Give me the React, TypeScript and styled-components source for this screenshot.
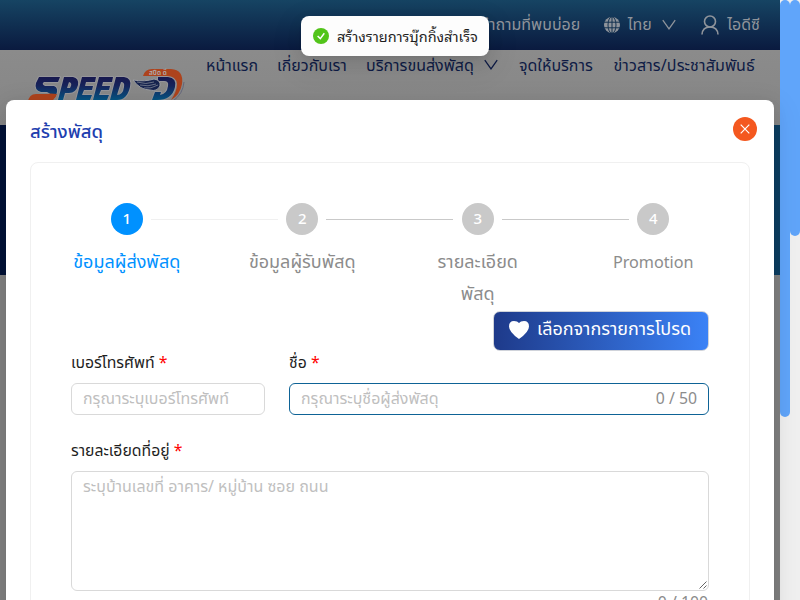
import React from "react";
import styled, { createGlobalStyle, css } from "styled-components";

const Global = createGlobalStyle`
  * { box-sizing: border-box; }
  html, body { margin: 0; padding: 0; height: 600px; overflow: hidden; background: #808080; }
  body { font-family: "Noto Sans Thai", "Noto Sans", sans-serif; font-size: 16px; color: #1f1f1f; }
`;

const Screen = styled.div`
  position: relative;
  display: flex;
  width: 800px;
  height: 600px;
  overflow: hidden;
`;

const Page = styled.div`
  display: flex;
  flex-direction: column;
  width: 780px;
  background: #808080;
`;

const TopBar = styled.header`
  height: 50px;
  flex: none;
  display: flex;
  justify-content: flex-end;
  align-items: center;
  padding: 0 20px 1px 0;
  background: linear-gradient(#164463, #0a1a3f);
  color: #8f949b;
  white-space: nowrap;
`;

const NavBar = styled.nav`
  height: 75px;
  flex: none;
  display: flex;
  align-items: flex-start;
  padding-left: 26px;
  background: linear-gradient(#8b8b8b, #868686);
  color: #0e1b45;
  white-space: nowrap;
`;

const LogoSlot = styled.div`
  width: 180px;
  padding-top: 14px;
`;

const NavChevron = styled.span`
  width: 35px;
  padding-top: 9px;
`;

const Hero = styled.div`
  height: 150px;
  flex: none;
  background: linear-gradient(90deg, #001136, #0c3d60);
`;

const Label = styled.span<{ $w?: number; $size?: number; $gap?: number; $space?: number }>`
  display: inline-block;
  white-space: nowrap;
  font-size: ${(p) => p.$size ?? 16}px;
  line-height: 32px;
  ${(p) => p.$w && css`width: ${p.$w}px;`}
  margin-left: ${(p) => p.$gap ?? 0}px;
  letter-spacing: ${(p) => p.$space ?? 0}px;
`;

const Icon = styled.svg<{ $gap?: number }>`
  display: block;
  flex: none;
  margin-left: ${(p) => p.$gap ?? 0}px;
`;

const Scrollbar = styled.div`
  width: 10px;
  height: 600px;
  background: #f0f0f0;
`;

const Thumb = styled.div<{ $h: number }>`
  height: ${(p) => p.$h}px;
  border-radius: 5px;
  background: #60a5fa;
`;

const Modal = styled.section`
  position: absolute;
  left: 6px;
  top: 100px;
  width: 768px;
  height: 520px;
  padding: 16px 24px 0;
  background: #fff;
  border-radius: 8px;
  box-shadow: 0 6px 16px rgba(0, 0, 0, 0.08), 0 9px 28px 8px rgba(0, 0, 0, 0.05);
`;

const ModalHead = styled.div`
  display: flex;
  justify-content: space-between;
  align-items: flex-start;
  height: 46px;
  margin-right: -7px;
  color: #1e40af;
  font-weight: 500;
`;

const Close = styled.button`
  width: 24px;
  height: 24px;
  margin: 1px 0 0;
  padding: 0;
  border: 0;
  border-radius: 50%;
  background: #f4581f;
  display: grid;
  place-items: center;
`;

const Card = styled.div`
  height: 480px;
  border: 1px solid #f0f0f0;
  border-radius: 8px;
  padding: 40px 40px 0;
`;

const Steps = styled.div`
  display: grid;
  grid-template-columns: repeat(4, 175.5px);
  width: 702px;
  margin-left: -32px;
  height: 108px;
`;

const Step = styled.div<{ $active?: boolean }>`
  display: grid;
  grid-template-columns: 71.75px 32px 71.75px;
  grid-template-rows: 32px auto;
  row-gap: 12px;
  align-content: start;
  color: ${(p) => (p.$active ? "#0091ff" : "#8c8c8c")};
`;

const Dot = styled.div<{ $active?: boolean }>`
  grid-column: 2;
  width: 32px;
  height: 32px;
  border-radius: 50%;
  background: ${(p) => (p.$active ? "#0091ff" : "#c9c9c9")};
  color: #fff;
  text-align: center;
  line-height: 33px;
  font-size: 15px;
  font-weight: 500;
`;

const Rail = styled.div<{ $light?: boolean }>`
  height: 1px;
  width: 127px;
  margin: 16px 0 0 8px;
  background: ${(p) => (p.$light ? "#f0f0f0" : "#c9c9c9")};
`;

const StepTitle = styled.div<{ $latin?: boolean }>`
  grid-column: 1 / 4;
  grid-row: 2;
  text-align: center;
  line-height: 32px;
  font-size: ${(p) => (p.$latin ? 16.2 : 18)}px;
  white-space: pre-line;
`;

const Favourite = styled.button`
  display: flex;
  align-items: center;
  width: 216px;
  height: 40px;
  margin: 0 0 0 auto;
  padding: 0 0 2px 15px;
  border: 1px solid #d0d3da;
  border-radius: 7px;
  background: linear-gradient(90deg, #1e3a8a, #3b82f6);
  color: #fff;
  font: inherit;
  font-weight: 450;
`;

const Row = styled.div`
  display: grid;
  grid-template-columns: 194px 420px;
  column-gap: 24px;
  margin-bottom: 24px;
`;

const FieldLabel = styled.label`
  display: block;
  height: 32px;
  line-height: 25px;
  font-size: 15.8px;
  white-space: nowrap;
`;

const Star = styled.span`
  color: #f00;
`;

const Input = styled.div<{ $focus?: boolean; $area?: boolean }>`
  position: relative;
  display: flex;
  justify-content: space-between;
  height: ${(p) => (p.$area ? 120 : 32)}px;
  padding: 0 11px;
  border: 1px solid ${(p) => (p.$focus ? "#0e6396" : "#d9d9d9")};
  border-radius: 6px;
  line-height: 30px;
  color: #bfbfbf;
`;

const Count = styled.span`
  color: #8c8c8c;
  font-size: 15.8px;
  line-height: 31px;
`;

const TotalCount = styled.div`
  text-align: right;
  padding-right: 1px;
  line-height: 24px;
  font-size: 15.8px;
  color: #8c8c8c;
`;

const Grip = styled.svg`
  position: absolute;
  right: 1px;
  bottom: 1px;
`;

const Toast = styled.div`
  position: absolute;
  left: 301px;
  top: 16px;
  width: 188px;
  height: 40px;
  display: flex;
  align-items: center;
  padding-left: 12px;
  background: #fdfdfd;
  border-radius: 8px;
  font-family: "Noto Sans Thai Looped", "Noto Sans", sans-serif;
  box-shadow: 0 6px 16px rgba(0, 0, 0, 0.08), 0 3px 6px -4px rgba(0, 0, 0, 0.12), 0 9px 28px 8px rgba(0, 0, 0, 0.05);
`;

const Chevron = ({ gap }: { gap: number }) => (
  <Icon $gap={gap} width="14" height="12" viewBox="0 0 14 12" fill="none" stroke="currentColor" strokeWidth="1.3">
    <path d="M.8 1.2 7 9.8l6.200-8.600" />
  </Icon>
);

const Logo = () => (
  <Icon width="162" height="52" viewBox="0 0 162 52">
    <defs>
      <linearGradient id="ink" gradientUnits="userSpaceOnUse" x1="0" y1="12" x2="0" y2="36">
        <stop offset="0" stopColor="#18174c" />
        <stop offset=".4" stopColor="#17245b" />
        <stop offset="1" stopColor="#075583" />
      </linearGradient>
    </defs>
    <g stroke="#96969a" strokeWidth="2" strokeLinejoin="round" fill="url(#ink)" paintOrder="stroke" fillRule="evenodd">
      <path d="M13 13H34L32 18H18Q15 20 19 22H28Q33 24 30 31L28 34Q26 30 21 28H15Q8 26 10 19Z" />
      <path d="M38 13H47Q53 14 52 21Q50 29 43 29H39L37 36H32Z M43 18L41 24H44Q47 19 43 18Z" />
      <path d="M56 13H70L69 18H60L59 22H67L66 26H58L56 31H66L64 36H50Z" />
      <path d="M73 13H87L86 18H77L76 22H84L83 26H75L73 31H83L81 36H67Z" />
      <path d="M90 13H98Q106 14 104 23Q101 36 91 36H84Z M95 18L91 31Q97 31 98 23Q99 18 95 18Z" />
      <path d="M132 13H142Q151 14 149 23Q146 36 131 36H126L129 28H135L134 31Q141 30 142 22Q143 17 138 17H132Z" />
    </g>
    <path d="M2 38Q3 30 10 30H21Q24 29 31 30Q29 37 21 38Z" fill="#ad431d" />
    <path d="M117 12Q119 5 126 5H145Q158 6 156 20Q154 31 145 36Q151 27 151 20Q150 12 141 12Z" fill="#ad431d" />
    <path d="M158 18Q157 30 147 37" fill="none" stroke="#5c6078" strokeWidth=".8" />
    <path d="M107 16Q119 18 128 15Q135 16 134 22Q131 28 124 26Q114 26 107 16Z" fill="#17244f" stroke="#9a9ca1" strokeWidth="1" />
    <path d="M111 18Q120 21 128 18M114 21Q122 23 130 20M118 24Q125 25 132 21" fill="none" stroke="#8b919c" strokeWidth=".7" />
    <text x="123" y="10.500" fontSize="6.500" fontWeight="600" fill="#b0b0b0">สปีด ดี</text>
  </Icon>
);

export default function App() {
  return (
    <>
      <Global />
      <Screen>
        <Page>
          <TopBar>
            <Label>คำถามที่พบบ่อย</Label>
            <Icon $gap={24} width="16" height="16" viewBox="0 0 16 16">
              <circle cx="8" cy="8" r="8" fill="currentColor" />
              <path d="M0 5.200H16M0 10.800H16M8 0V16" stroke="#12304f" strokeWidth="1" />
              <ellipse cx="8" cy="8" rx="4" ry="8.300" fill="none" stroke="#12304f" />
            </Icon>
            <Label $gap={7.5}>ไทย</Label>
            <Chevron gap={10} />
            <Icon $gap={25.5} width="18" height="20" viewBox="0 0 18 20" fill="none" stroke="currentColor" strokeWidth="1.600">
              <circle cx="9" cy="6.500" r="5.500" />
              <path d="M1 19.500Q1.500 12 9 12t8 7.500" />
            </Icon>
            <Label $gap={8}>ไอดีซี</Label>
          </TopBar>
          <NavBar>
            <LogoSlot><Logo /></LogoSlot>
            <Label $w={71}>หน้าแรก</Label>
            <Label $w={89}>เกี่ยวกับเรา</Label>
            <Label $w={118}>บริการขนส่งพัสดุ</Label>
            <NavChevron><Chevron gap={0} /></NavChevron>
            <Label $w={94.5}>จุดให้บริการ</Label>
            <Label $space={0.12}>ข่าวสาร/ประชาสัมพันธ์</Label>
          </NavBar>
          <Hero />
        </Page>
        <Scrollbar><Thumb $h={417} /></Scrollbar>
        <Scrollbar><Thumb $h={236} /></Scrollbar>

        <Modal>
          <ModalHead>
            <Label $size={18.5}>สร้างพัสดุ</Label>
            <Close aria-label="ปิด">
              <svg width="10" height="10" viewBox="0 0 10 10" stroke="#fff" strokeWidth="1.200"><path d="M.7.7l8.600 8.600M9.300.7.7 9.300" /></svg>
            </Close>
          </ModalHead>
          <Card>
            <Steps>
              <Step $active><Dot $active>1</Dot><Rail $light /><StepTitle>ข้อมูลผู้ส่งพัสดุ</StepTitle></Step>
              <Step><Dot>2</Dot><Rail /><StepTitle>ข้อมูลผู้รับพัสดุ</StepTitle></Step>
              <Step><Dot>3</Dot><Rail /><StepTitle>{"รายละเอียด\nพัสดุ"}</StepTitle></Step>
              <Step><Dot>4</Dot><StepTitle $latin>Promotion</StepTitle></Step>
            </Steps>
            <Favourite>
              <svg width="20" height="18" viewBox="0 0 20 18" fill="#fff"><path d="M10 18Q0 11 0 5.500Q0 0 5 0Q8.500 0 10 2Q11.500 0 15 0Q20 0 20 5.500Q20 11 10 18Z" /></svg>
              <Label $gap={8} $size={18}>เลือกจากรายการโปรด</Label>
            </Favourite>
            <Row>
              <div>
                <FieldLabel>เบอร์โทรศัพท์ <Star>*</Star></FieldLabel>
                <Input><span>กรุณาระบุเบอร์โทรศัพท์</span></Input>
              </div>
              <div>
                <FieldLabel>ชื่อ <Star>*</Star></FieldLabel>
                <Input $focus><span>กรุณาระบุชื่อผู้ส่งพัสดุ</span><Count>0 / 50</Count></Input>
              </div>
            </Row>
            <FieldLabel>รายละเอียดที่อยู่ <Star>*</Star></FieldLabel>
            <Input $area>
              <span>ระบุบ้านเลขที่ อาคาร/ หมู่บ้าน ซอย ถนน</span>
              <Grip width="8" height="8" viewBox="0 0 8 8" stroke="#555" strokeWidth=".9"><path d="M.5 7.500l7-7M4.500 7.500l3-3" /></Grip>
            </Input>
            <TotalCount>0 / 100</TotalCount>
          </Card>
        </Modal>

        <Toast>
          <svg width="16" height="16" viewBox="0 0 16 16"><circle cx="8" cy="8" r="8" fill="#52c41a" /><path d="M4.600 8 7.300 10.600 11.300 5.300" fill="none" stroke="#fff" strokeWidth="1.500" /></svg>
          <Label $gap={8} $size={14.5}>สร้างรายการบุ๊กกิ้งสำเร็จ</Label>
        </Toast>
      </Screen>
    </>
  );
}
